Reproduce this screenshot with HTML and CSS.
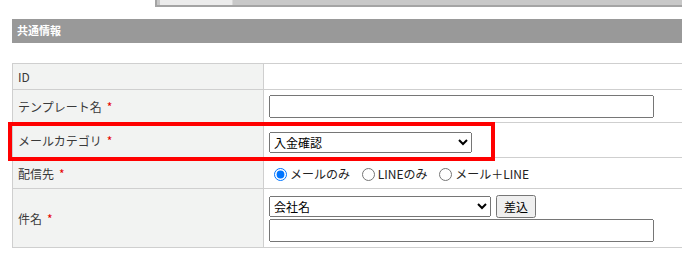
FILE: index.html
```html
<!DOCTYPE html>
<html>
<head>
    <meta charset="utf-8">
    <link rel="stylesheet" href="styles.css">
</head>
<body>
    <div class="scroll-edge">
        <div class="scroll-thumb"></div>
    </div>

    <div class="section-title">共通情報</div>

    <div class="form-wrap">
        <table class="form-table">
            <tr class="row-id">
                <th>ID</th>
                <td></td>
            </tr>
            <tr class="row-name">
                <th>テンプレート名<span class="req">*</span></th>
                <td><input type="text" class="input-wide"></td>
            </tr>
            <tr class="row-category">
                <th>メールカテゴリ<span class="req">*</span></th>
                <td>
                    <select class="select-category">
                        <option>入金確認</option>
                    </select>
                </td>
            </tr>
            <tr class="row-dest">
                <th>配信先<span class="req">*</span></th>
                <td>
                    <label class="radio"><input type="radio" name="dest" checked>メールのみ</label>
                    <label class="radio"><input type="radio" name="dest">LINEのみ</label>
                    <label class="radio"><input type="radio" name="dest">メール＋LINE</label>
                </td>
            </tr>
            <tr class="row-subject">
                <th>件名<span class="req">*</span></th>
                <td>
                    <div class="insert-line">
                        <select class="select-field">
                            <option>会社名</option>
                        </select>
                        <button class="btn-insert">差込</button>
                    </div>
                    <input type="text" class="input-wide">
                </td>
            </tr>
        </table>

        <!-- 注目枠 -->
        <div class="highlight"></div>
    </div>
</body>
</html>
```

FILE: styles.css
```css
html, body {
    overflow: hidden;
}

body {
    margin: 0;
    background: #fff;
    font-family: "Noto Sans CJK JP", sans-serif;
    font-size: 12px;
    color: #333;
}

.scroll-edge {
    margin-left: 155px;
    height: 5px;
    background: #c8c8c8;
    border-left: 2px solid #a4a4a4;
    border-bottom: 2px solid #a4a4a4;
    padding-left: 3px;
}

.scroll-thumb {
    width: 72px;
    height: 5px;
    background: #ececec;
    border-right: 1px solid #d8d8d8;
}

.section-title {
    margin: 12px 0 0 12px;
    height: 24px;
    box-sizing: border-box;
    padding: 2px 5px 0;
    background: #999;
    color: #fff;
    font-size: 11px;
    font-weight: bold;
    line-height: 18px;
}

.form-wrap {
    position: relative;
    margin-top: 20px;
}

.form-table {
    margin-left: 12px;
    width: 670px;
    border-collapse: collapse;
    border: 1px solid #cfcfcf;
    border-right: none;
}

.form-table th,
.form-table td {
    border: 1px solid #cfcfcf;
    padding: 0 5px;
    vertical-align: middle;
}

.form-table td {
    border-right: none;
}

.form-table th {
    width: 240px;
    background: #f2f3f2;
    font-weight: normal;
    text-align: left;
    color: #3a3a3a;
}

.req {
    color: #e60000;
    margin-left: 5px;
}

.row-id th { height: 25px; }
.row-name th { height: 32px; }
.row-category th { height: 34px; }
.row-dest th { height: 30px; }
.row-subject th { height: 58px; }

.row-category td {
    padding-top: 4px;
}

.form-table input[type="text"],
.form-table select,
.form-table button {
    font-family: "Noto Sans CJK JP", sans-serif;
    font-size: 12px;
    box-sizing: border-box;
    margin: 0;
    vertical-align: middle;
}

.input-wide {
    display: block;
    width: 385px;
    height: 23px;
}

.select-category {
    display: block;
    width: 203px;
    height: 21px;
}

.radio {
    color: #222;
    margin-right: 4px;
}

.radio input {
    margin: 0 3px 0 5px;
    vertical-align: -2px;
}

.insert-line {
    display: flex;
    align-items: center;
    gap: 5px;
    margin-bottom: 1px;
}

.select-field {
    width: 222px;
    height: 21px;
}

.btn-insert {
    width: 40px;
    height: 23px;
    padding: 0;
}

.highlight {
    position: absolute;
    left: 8px;
    top: 59px;
    width: 487px;
    height: 39px;
    box-sizing: border-box;
    border: 4px solid #f00;
    pointer-events: none;
}
```
